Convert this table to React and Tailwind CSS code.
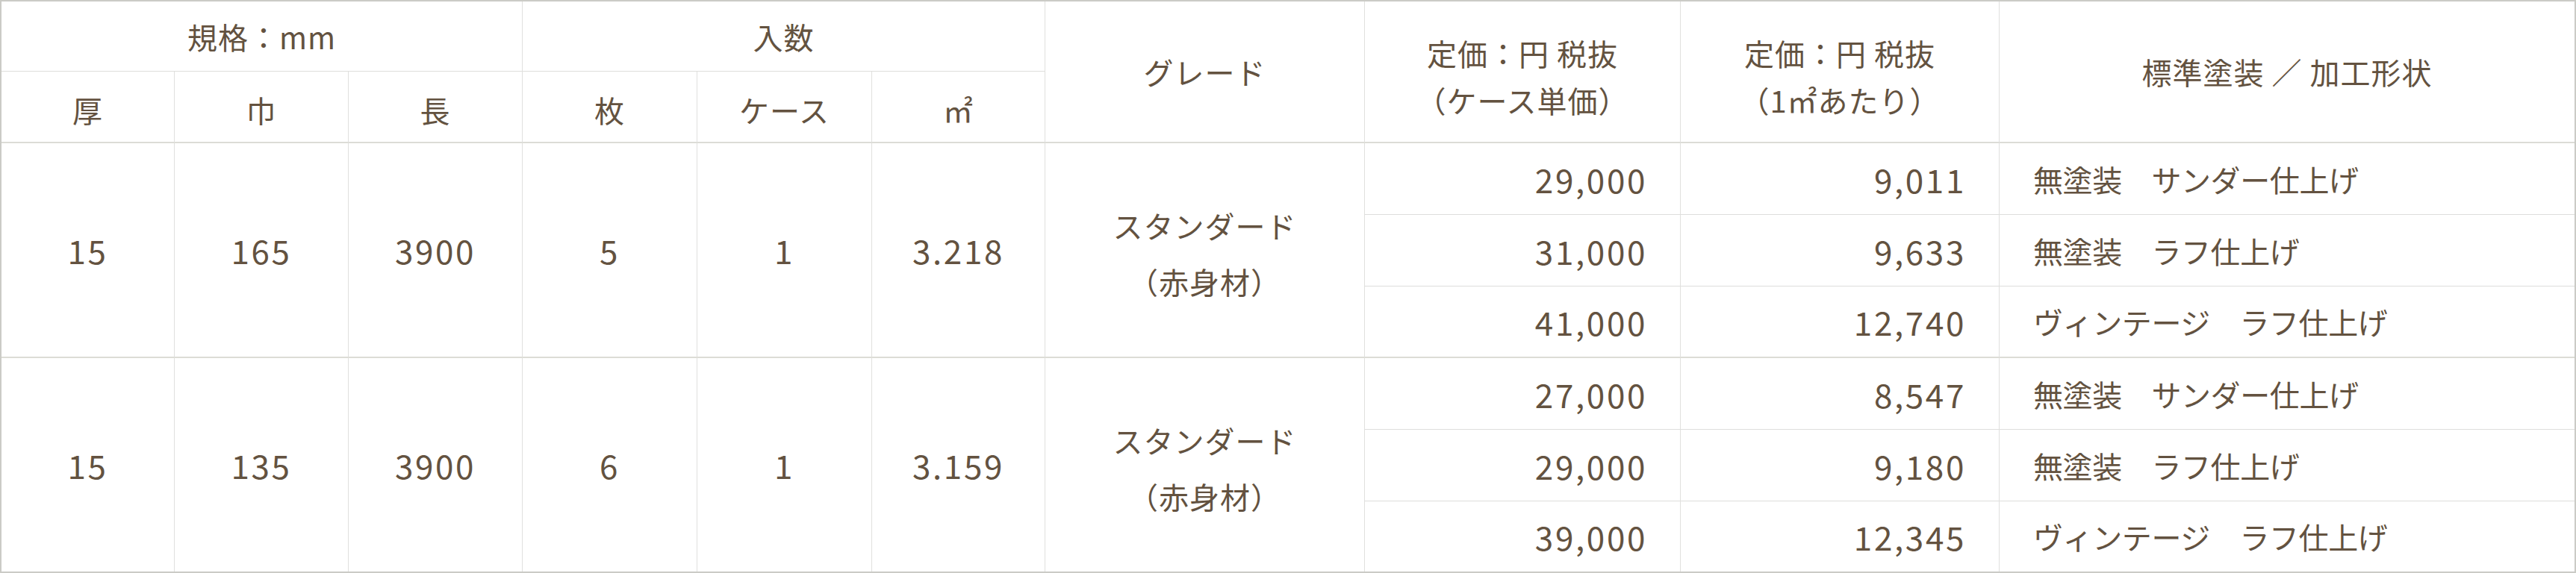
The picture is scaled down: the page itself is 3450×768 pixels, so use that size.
import React from 'react';

const GROUPS = [
  {
    thick: '15',
    width: '165',
    length: '3900',
    pieces: '5',
    cases: '1',
    area: '3.218',
    rows: [
      { casePrice: '29,000', unitPrice: '9,011', finish: '無塗装　サンダー仕上げ' },
      { casePrice: '31,000', unitPrice: '9,633', finish: '無塗装　ラフ仕上げ' },
      { casePrice: '41,000', unitPrice: '12,740', finish: 'ヴィンテージ　ラフ仕上げ' },
    ],
  },
  {
    thick: '15',
    width: '135',
    length: '3900',
    pieces: '6',
    cases: '1',
    area: '3.159',
    rows: [
      { casePrice: '27,000', unitPrice: '8,547', finish: '無塗装　サンダー仕上げ' },
      { casePrice: '29,000', unitPrice: '9,180', finish: '無塗装　ラフ仕上げ' },
      { casePrice: '39,000', unitPrice: '12,345', finish: 'ヴィンテージ　ラフ仕上げ' },
    ],
  },
];

const cell = 'flex items-center justify-center border-[#e0e0de]';
const num = 'text-[44px] tracking-[0.06em]';

const GroupRows = ({ g, last }) => {
  // group cells span 3 rows, bottom rule is 2px except on the last group
  const span = `${cell} row-span-3 border-r ${last ? '' : 'border-b-2 border-b-[#dcdcd6]'}`;
  return (
    <>
      <div className={`${span} ${num}`}>{g.thick}</div>
      <div className={`${span} ${num}`}>{g.width}</div>
      <div className={`${span} ${num}`}>{g.length}</div>
      <div className={`${span} ${num}`}>{g.pieces}</div>
      <div className={`${span} ${num}`}>{g.cases}</div>
      <div className={`${span} ${num}`}>{g.area}</div>
      <div className={`${span} flex-col leading-[75px] pt-[10px]`}>
        <span>スタンダード</span>
        <span>（赤身材）</span>
      </div>
      {g.rows.map((r, i) => {
        const bottom =
          i < 2 ? 'border-b border-b-[#dededc]' : last ? '' : 'border-b-2 border-b-[#dcdcd6]';
        return (
          <React.Fragment key={i}>
            <div className={`${cell} !justify-end pr-[44px] border-r ${bottom} ${num}`}>{r.casePrice}</div>
            <div className={`${cell} !justify-end pr-[44px] border-r ${bottom} ${num}`}>{r.unitPrice}</div>
            <div className={`${cell} !justify-start pl-[45px] tracking-[-0.01em] ${bottom}`}>{r.finish}</div>
          </React.Fragment>
        );
      })}
    </>
  );
};

export default function App() {
  return (
    <div className="w-[3450px] h-[768px] bg-white border-2 border-[#cbcbc6] font-['Noto_Sans_CJK_JP',sans-serif] text-[40px] tracking-[0.025em] text-[#635240]">
      <div className="grid grid-cols-[232px_233px_233px_234px_234px_232px_428px_423px_427px_770px] grid-rows-[94px_96px_96px_96px_96px_96px_96px_94px]">
        {/* header row 1 */}
        <div className={`${cell} col-span-3 border-r border-b border-b-[#dededc]`}>規格：mm</div>
        <div className={`${cell} col-span-3 border-r border-b border-b-[#dededc]`}>入数</div>
        <div className={`${cell} row-span-2 border-r border-b-2 border-b-[#dcdcd6]`}>グレード</div>
        <div className={`${cell} row-span-2 flex-col border-r border-b-2 border-b-[#dcdcd6] leading-[63px] pt-[14px]`}>
          <span>定価：円 税抜</span>
          <span>（ケース単価）</span>
        </div>
        <div className={`${cell} row-span-2 flex-col border-r border-b-2 border-b-[#dcdcd6] leading-[63px] pt-[14px]`}>
          <span>定価：円 税抜</span>
          <span>（1㎡あたり）</span>
        </div>
        <div className={`${cell} row-span-2 border-b-2 border-b-[#dcdcd6]`}>標準塗装 ／ 加工形状</div>

        {/* header row 2 */}
        {['厚', '巾', '長', '枚', 'ケース', '㎡'].map((h) => (
          <div key={h} className={`${cell} border-r border-b-2 border-b-[#dcdcd6] pt-[8px]`}>
            {h}
          </div>
        ))}

        {GROUPS.map((g, i) => (
          <GroupRows key={i} g={g} last={i === GROUPS.length - 1} />
        ))}
      </div>
    </div>
  );
}
